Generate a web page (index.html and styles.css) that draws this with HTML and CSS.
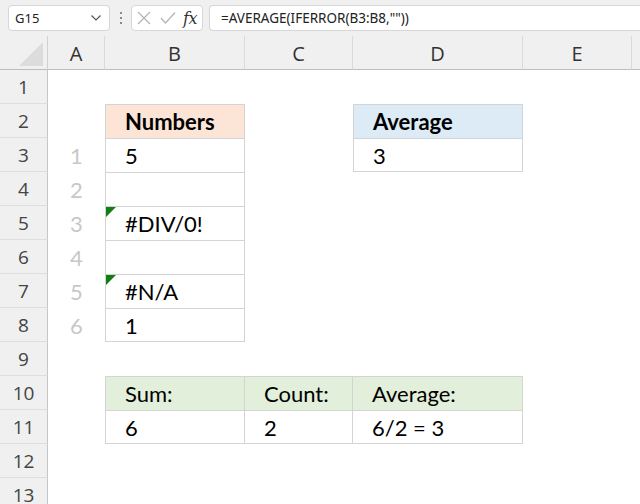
FILE: index.html
```html
<!DOCTYPE html>
<html>
<head>
<meta charset="utf-8">
<link rel="stylesheet" href="styles.css">
</head>
<body>
<div class="app">
  <div class="topbar">
    <div class="namebox">
      <span class="nb-text">G15</span>
      <svg class="chev" width="10" height="6" viewBox="0 0 10 6"><path d="M0.5 0.5 L5 5 L9.5 0.5" fill="none" stroke="#555" stroke-width="1.2"/></svg>
    </div>
    <div class="vdots"><span></span><span></span><span></span></div>
    <div class="btnbox">
      <svg class="ico" width="14" height="14" viewBox="0 0 14 14"><path d="M1 1 L13 13 M13 1 L1 13" stroke="#b4b4b4" stroke-width="1.2" fill="none"/></svg>
      <svg class="ico" width="16" height="14" viewBox="0 0 16 14"><path d="M1 7 L5.5 12 L15 1.5" stroke="#b4b4b4" stroke-width="1.2" fill="none"/></svg>
      <span class="fx">fx</span>
    </div>
    <div class="formula">=AVERAGE(IFERROR(B3:B8,""))</div>
  </div>
  <div class="sheet">
    <div class="corner"><div class="tri"></div></div>
    <div class="ch">A</div><div class="ch">B</div><div class="ch">C</div><div class="ch">D</div><div class="ch">E</div><div class="ch last"></div>

    <div class="rh">1</div><div></div><div></div><div></div><div></div><div></div><div></div>

    <div class="rh">2</div><div></div><div class="c t top orange b">Numbers</div><div></div><div class="c t top blue b">Average</div><div></div><div></div>

    <div class="rh">3</div><div class="idx">1</div><div class="c t">5</div><div></div><div class="c t bot">3</div><div></div><div></div>

    <div class="rh">4</div><div class="idx">2</div><div class="c t"></div><div></div><div></div><div></div><div></div>

    <div class="rh">5</div><div class="idx">3</div><div class="c t err">#DIV/0!</div><div></div><div></div><div></div><div></div>

    <div class="rh">6</div><div class="idx">4</div><div class="c t"></div><div></div><div></div><div></div><div></div>

    <div class="rh">7</div><div class="idx">5</div><div class="c t err">#N/A</div><div></div><div></div><div></div><div></div>

    <div class="rh">8</div><div class="idx">6</div><div class="c t bot">1</div><div></div><div></div><div></div><div></div>

    <div class="rh">9</div><div></div><div></div><div></div><div></div><div></div><div></div>

    <div class="rh">10</div><div></div><div class="c t top green">Sum:</div><div class="c t top green">Count:</div><div class="c t top green">Average:</div><div></div><div></div>

    <div class="rh">11</div><div></div><div class="c t bot">6</div><div class="c t bot">2</div><div class="c t bot">6/2 = 3</div><div></div><div></div>

    <div class="rh">12</div><div></div><div></div><div></div><div></div><div></div><div></div>

    <div class="rh">13</div><div></div><div></div><div></div><div></div><div></div><div></div>
  </div>
</div>
</body>
</html>
```

FILE: styles.css
```css
* { box-sizing: border-box; }
html, body { margin: 0; padding: 0; background: #fff; }
body { width: 640px; height: 504px; overflow: hidden; }
.app { width: 640px; }

.topbar {
  height: 36px;
  background: #f0f0f0;
  display: flex;
  align-items: flex-start;
  padding-top: 5px;
  padding-left: 8px;
}
.namebox {
  width: 102px;
  height: 26px;
  background: #fff;
  border: 1px solid #d6d6d6;
  border-radius: 4px;
  display: flex;
  align-items: center;
  justify-content: space-between;
  padding: 0 8px 0 6px;
}
.nb-text { font-family: "Noto Sans", "Open Sans", sans-serif; font-size: 13px; color: #222; }
.vdots {
  width: 21px;
  height: 26px;
  display: flex;
  flex-direction: column;
  align-items: center;
  justify-content: center;
  gap: 3px;
}
.vdots span { width: 2px; height: 2px; background: #8a8a8a; display: block; }
.btnbox {
  width: 72px;
  height: 26px;
  background: #fff;
  border: 1px solid #d6d6d6;
  border-radius: 4px;
  display: flex;
  align-items: center;
  padding-left: 5px;
  gap: 9px;
}
.fx {
  font-family: "DejaVu Serif", "Liberation Serif", serif;
  font-style: italic;
  font-size: 16px;
  color: #333;
  margin-left: -2px;
  letter-spacing: -0.5px;
}
.formula {
  flex: 1;
  height: 26px;
  margin-left: 6px;
  background: #fff;
  border: 1px solid #d6d6d6;
  border-right: none;
  border-radius: 4px 0 0 4px;
  font-family: "Noto Sans", "Open Sans", sans-serif;
  font-size: 13.5px;
  color: #222;
  line-height: 24px;
  padding-left: 11px;
}

.sheet {
  display: grid;
  grid-template-columns: 48px 57px 140px 108px 170px 109px 1fr;
  grid-template-rows: 34px repeat(13, 34px);
}
.corner {
  background: #f0f0f0;
  border-right: 1px solid #d0d0d0;
  border-bottom: 1px solid #bdbdbd;
  position: relative;
}
.tri {
  position: absolute;
  right: 4px;
  bottom: 3px;
  width: 0; height: 0;
  border-left: 24px solid transparent;
  border-bottom: 24px solid #dcdcdc;
}
.ch {
  background: #f0f0f0;
  border-bottom: 1px solid #bdbdbd;
  border-right: 1px solid #dadada;
  font-family: "Open Sans", "Noto Sans", sans-serif;
  font-size: 20px;
  color: #333;
  display: flex;
  align-items: center;
  justify-content: center;
  padding-top: 2px;
}
.ch.last { border-right: none; }
.rh {
  background: #f0f0f0;
  border-right: 1px solid #c6c6c6;
  border-bottom: 1px solid #dddddd;
  font-family: "Open Sans", "Noto Sans", sans-serif;
  font-size: 19px;
  color: #444;
  display: flex;
  align-items: center;
  justify-content: center;
}
.idx {
  font-family: "Lato", sans-serif;
  font-size: 22px;
  color: #c8c8c8;
  display: flex;
  align-items: center;
  justify-content: center;
}
.c {
  font-family: "Lato", sans-serif;
  font-size: 22px;
  color: #000;
  display: flex;
  align-items: center;
  padding-left: 19px;
  position: relative;
}
.t {
  border-top: 1px solid #d4d4d4;
  border-left: 1px solid #d4d4d4;
  border-right: 1px solid #d4d4d4;
}
.t + .t { border-left: none; }
.bot { border-bottom: 1px solid #d4d4d4; }
.b { font-weight: 700; }
.orange { background: #fce4d6; }
.blue { background: #ddebf7; }
.green { background: #e2efda; }
.err::before {
  content: "";
  position: absolute;
  left: 0;
  top: 0;
  width: 0; height: 0;
  border-top: 10px solid #127f12;
  border-right: 10px solid transparent;
}
```
